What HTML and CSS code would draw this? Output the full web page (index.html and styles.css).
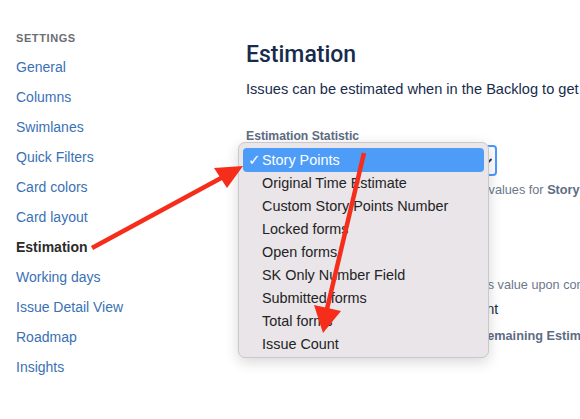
FILE: index.html
```html
<!DOCTYPE html>
<html>
<head>
<meta charset="utf-8">
<link rel="stylesheet" href="styles.css">
</head>
<body>
<div class="page">
  <nav class="sidebar">
    <div class="sidebar-title">SETTINGS</div>
    <ul class="nav">
      <li><a class="nav-link">General</a></li>
      <li><a class="nav-link">Columns</a></li>
      <li><a class="nav-link">Swimlanes</a></li>
      <li><a class="nav-link">Quick Filters</a></li>
      <li><a class="nav-link">Card colors</a></li>
      <li><a class="nav-link">Card layout</a></li>
      <li><span class="nav-link active">Estimation</span></li>
      <li><a class="nav-link">Working days</a></li>
      <li><a class="nav-link">Issue Detail View</a></li>
      <li><a class="nav-link">Roadmap</a></li>
      <li><a class="nav-link">Insights</a></li>
    </ul>
  </nav>
  <main class="main">
    <h1 class="title">Estimation</h1>
    <p class="intro">Issues can be estimated when in the Backlog to get an idea of how much work is in a sprint.</p>
    <div class="field">
      <label class="field-label">Estimation Statistic</label>
      <div class="select">
        <span class="select-value">Story Points</span>
        <svg class="chevron" width="10" height="10" viewBox="0 0 10 10"><path d="M2 3.5 L5 6.5 L8 3.5" fill="none" stroke="#253858" stroke-width="1.8" stroke-linecap="round" stroke-linejoin="round"/></svg>
      </div>
      <div class="help">Estimates on this board are taken from the values for <b>Story Points</b></div>
    </div>
    <div class="section">
      <h2 class="section-title">Time Tracking</h2>
      <div class="help first">Time Tracking will always update the issue's value upon completion</div>
      <label class="radio-row"><span class="radio"></span>Remaining Estimate and Time Spent</label>
      <div class="help last">Logging work on an issue will reduce the <b>Remaining Estimate</b></div>
    </div>
  </main>
</div>

<div class="menu">
  <div class="menu-item selected"><span class="check">✓</span>Story Points</div>
  <div class="menu-item"><span class="check"></span>Original Time Estimate</div>
  <div class="menu-item"><span class="check"></span>Custom Story Points Number</div>
  <div class="menu-item"><span class="check"></span>Locked forms</div>
  <div class="menu-item"><span class="check"></span>Open forms</div>
  <div class="menu-item"><span class="check"></span>SK Only Number Field</div>
  <div class="menu-item"><span class="check"></span>Submitted forms</div>
  <div class="menu-item"><span class="check"></span>Total forms</div>
  <div class="menu-item"><span class="check"></span>Issue Count</div>
</div>

<svg class="annotations" width="580" height="419" viewBox="0 0 580 419">
  <line x1="92" y1="248" x2="223" y2="177" stroke="#f52d1a" stroke-width="4.5"/>
  <polygon points="243,166 214,168 227,188" fill="#f52d1a"/>
  <line x1="364" y1="153" x2="327" y2="309" stroke="#f52d1a" stroke-width="4.5"/>
  <polygon points="323,333 314,305 341,311" fill="#f52d1a"/>
</svg>
</body>
</html>
```

FILE: styles.css
```css
* { box-sizing: border-box; }
html, body {
  margin: 0;
  padding: 0;
  background: #ffffff;
  width: 580px;
  height: 419px;
  overflow: hidden;
  font-family: "Liberation Sans", Arial, sans-serif;
}
.page {
  display: flex;
  width: 580px;
  height: 419px;
  position: relative;
}
.sidebar {
  width: 246px;
  flex: none;
  padding: 30px 0 0 16px;
}
.sidebar-title {
  font-size: 11px;
  line-height: 16px;
  font-weight: bold;
  color: #6b6e72;
  letter-spacing: 0.6px;
  margin-bottom: 6px;
}
.nav {
  list-style: none;
  margin: 0;
  padding: 0;
}
.nav li {
  height: 30px;
  line-height: 30px;
  font-size: 14px;
}
.nav-link {
  color: #3a71b4;
  text-decoration: none;
}
.nav-link.active {
  color: #2b2b2b;
  font-weight: bold;
}
.main {
  flex: 1;
  min-width: 0;
  padding-top: 41px;
  white-space: nowrap;
  overflow: hidden;
}
.title {
  margin: 0;
  font-family: Roboto, "Liberation Sans", sans-serif;
  font-weight: 500;
  font-size: 23px;
  line-height: 28px;
  color: #172b4d;
}
.intro {
  margin: 10px 0 0;
  font-size: 14.6px;
  line-height: 20px;
  color: #172b4d;
}
.field {
  margin-top: 29px;
}
.field-label {
  display: block;
  font-size: 12.2px;
  line-height: 16px;
  font-weight: bold;
  color: #5e6c84;
}
.select {
  margin-top: 1px;
  width: 251px;
  height: 31px;
  border: 2px solid #4c9aff;
  border-radius: 4px;
  background: #fff;
  display: flex;
  align-items: center;
  justify-content: space-between;
  padding: 0 2px 0 8px;
  font-size: 14px;
  color: #172b4d;
}
.help {
  margin-top: 6px;
  font-size: 12.7px;
  line-height: 16px;
  color: #6b778c;
}
.help b {
  font-weight: bold;
  color: #5e6c84;
}
.section {
  margin-top: 26px;
}
.section-title {
  margin: 0;
  font-size: 16px;
  line-height: 20px;
  font-weight: 500;
  color: #172b4d;
}
.help.first {
  margin-top: 33px;
}
.radio-row {
  display: flex;
  align-items: center;
  gap: 9px;
  margin-top: 6px;
  font-size: 14px;
  line-height: 20px;
  color: #172b4d;
}
.radio {
  width: 16px;
  height: 16px;
  border-radius: 50%;
  border: 4px solid #0052cc;
}
.help.last {
  margin-top: 9px;
}
.menu {
  position: absolute;
  left: 238px;
  top: 142px;
  width: 251px;
  padding: 5px 4px 1px;
  background: #e9e5e9;
  border: 1px solid #cbc8cb;
  border-radius: 7px;
  box-shadow: 0 4px 14px rgba(0,0,0,0.16);
}
.menu-item {
  height: 23px;
  line-height: 23px;
  font-size: 14.4px;
  color: #232323;
  display: flex;
  align-items: center;
  border-radius: 4px;
  padding-left: 5px;
}
.menu-item.selected {
  background: #4d9cf7;
  color: #ffffff;
  height: 24px;
}
.check {
  width: 14px;
  flex: none;
  font-size: 15px;
  font-family: "DejaVu Sans", sans-serif;
}
.annotations {
  position: absolute;
  left: 0;
  top: 0;
  pointer-events: none;
}
```
